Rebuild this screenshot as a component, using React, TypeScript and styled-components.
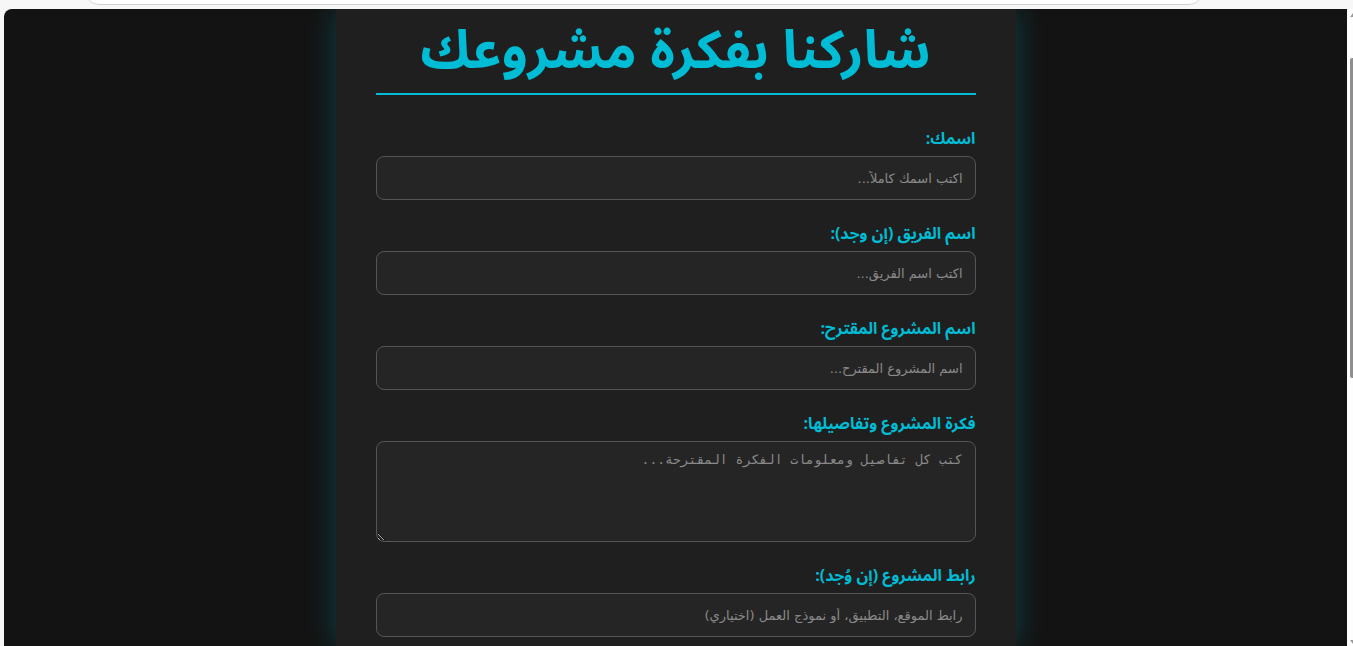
import React from "react";
import styled, { createGlobalStyle } from "styled-components";

const Global = createGlobalStyle`
  html, body { margin: 0; padding: 0; height: 100%; overflow: hidden; background: #f7f7f7; }
  #root { height: 100%; }
  * { box-sizing: border-box; }
`;

const Window = styled.div`
  height: 646px;
  display: flex;
  flex-direction: column;
  background: #f7f7f7;
`;

const TopStrip = styled.div`
  height: 9px;
  flex: none;
  display: flex;
  align-items: flex-end;
  padding: 0 150px 0 85px;
  overflow: hidden;
`;

const AddressBox = styled.div`
  flex: 1;
  height: 30px;
  margin-bottom: 4px;
  background: #ffffff;
  border: 1px solid #d2d2d2;
  border-radius: 0 0 14px 14px;
`;

const Body = styled.div`
  flex: 1;
  display: flex;
  padding-left: 4px;
  min-height: 0;
`;

const Viewport = styled.div`
  flex: 1;
  background: #131313;
  border-top-left-radius: 8px;
  overflow: hidden;
  display: flex;
  justify-content: center;
`;

const Scrollbar = styled.div`
  width: 6px;
  flex: none;
  background: #fdfdfd;
  position: relative;
`;

const ScrollThumb = styled.div`
  position: absolute;
  right: 0;
  top: 49px;
  width: 3px;
  height: 320px;
  background: #8e8e8e;
  border-radius: 2px 0 0 2px;
`;

const ArrowUp = styled.div`
  position: absolute;
  right: 0;
  top: 4px;
  width: 0;
  height: 0;
  border-left: 3px solid transparent;
  border-bottom: 4px solid #9a9a9a;
`;

const ArrowDown = styled.div`
  position: absolute;
  right: 0;
  bottom: 2px;
  width: 0;
  height: 0;
  border-left: 3px solid transparent;
  border-top: 4px solid #9a9a9a;
`;

const Panel = styled.form`
  width: 680px;
  flex: none;
  background: #1f1f1f;
  box-shadow: 0 0 28px rgba(0, 188, 212, 0.28);
  padding: 0 40px;
  direction: rtl;
  font-family: "Noto Sans Arabic", "DejaVu Sans", sans-serif;
`;

const Title = styled.h1`
  margin: 0 0 33px;
  padding: 0;
  border-bottom: 2px solid #00bcd4;
  color: #00bcd4;
  font-size: 53px;
  font-weight: 700;
  text-align: center;
  line-height: 84px;
`;

const Group = styled.div`
  margin-bottom: 23px;
`;

const Label = styled.label`
  display: block;
  color: #00bcd4;
  font-size: 16px;
  font-weight: 700;
  line-height: 22px;
  margin-bottom: 6px;
`;

const fieldCss = `
  width: 100%;
  display: block;
  background: #252525;
  border: 1px solid #555;
  border-radius: 8px;
  color: #ddd;
  padding: 0 12px;
  outline: none;
  &::placeholder { color: #8a8a8a; }
`;

const Input = styled.input`
  ${fieldCss}
  height: 44px;
  font-family: "DejaVu Sans", sans-serif;
  font-size: 13px;
`;

const TextArea = styled.textarea`
  ${fieldCss}
  height: 101px;
  padding-top: 10px;
  font-family: "DejaVu Sans Mono", monospace;
  font-size: 13px;
  resize: vertical;
`;

const fields = [
  { label: "اسمك:", ph: "اكتب اسمك كاملاً..." },
  { label: "اسم الفريق (إن وجد):", ph: "اكتب اسم الفريق..." },
  { label: "اسم المشروع المقترح:", ph: "اسم المشروع المقترح..." },
];

export default function App() {
  return (
    <>
      <Global />
      <Window>
        <TopStrip>
          <AddressBox />
        </TopStrip>
        <Body>
          <Viewport>
            <Panel onSubmit={(e) => e.preventDefault()}>
              <Title>شاركنا بفكرة مشروعك</Title>
              {fields.map((f) => (
                <Group key={f.label}>
                  <Label>{f.label}</Label>
                  <Input placeholder={f.ph} />
                </Group>
              ))}
              <Group>
                <Label>فكرة المشروع وتفاصيلها:</Label>
                <TextArea placeholder="كتب كل تفاصيل ومعلومات الفكرة المقترحة..." />
              </Group>
              <Group>
                <Label>رابط المشروع (إن وُجد):</Label>
                <Input placeholder="رابط الموقع، التطبيق، أو نموذج العمل (اختياري)" />
              </Group>
            </Panel>
          </Viewport>
          <Scrollbar>
            <ArrowUp />
            <ScrollThumb />
            <ArrowDown />
          </Scrollbar>
        </Body>
      </Window>
    </>
  );
}
